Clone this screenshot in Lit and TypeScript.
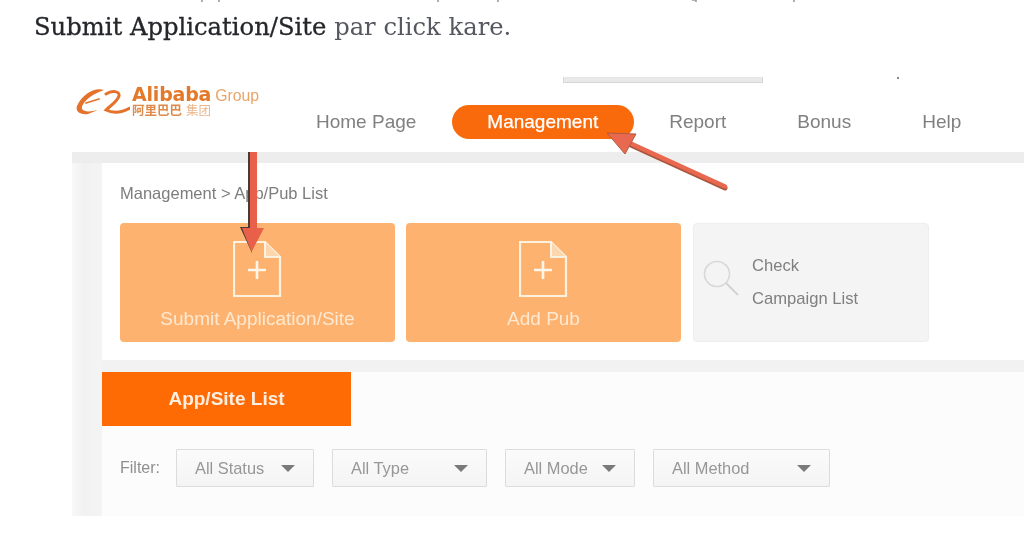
import { LitElement, html, css, svg } from "lit";
import { customElement } from "lit/decorators.js";

const NAV = [
  { label: "Home Page", active: false },
  { label: "Management", active: true },
  { label: "Report", active: false },
  { label: "Bonus", active: false },
  { label: "Help", active: false },
];

const FILTERS = [
  { label: "All Status", width: 138 },
  { label: "All Type", width: 155 },
  { label: "All Mode", width: 130 },
  { label: "All Method", width: 177 },
];

const docIcon = html`<svg class="doc" width="50" height="58" viewBox="1 0 50 58" fill="none">
  <path d="M2 2H33L48 17V56H2Z" stroke="#fdf1df" stroke-width="2.2" />
  <path d="M33 2V17H48" stroke="#fdf1df" stroke-width="2" fill="#fcd7ad" />
  <path d="M16 30H34M25 21V39" stroke="#fff6ea" stroke-width="2.6" />
</svg>`;

@customElement("app-root")
export class AppRoot extends LitElement {
  static styles = css`
    :host {
      display: block;
      position: relative;
      width: 1024px;
      height: 536px;
      overflow: hidden;
      background: #fff;
      font-family: "Liberation Sans", Arial, sans-serif;
    }
    .page {
      filter: blur(0.55px);
    }
    .ticks {
      display: block;
      height: 4px;
    }
    .lead {
      height: 66px;
      box-sizing: border-box;
      padding: 8px 0 0 34px;
      font-family: "DejaVu Serif", serif;
      font-size: 24.25px;
      line-height: 30px;
      color: #55585e;
      white-space: nowrap;
    }
    .lead b {
      font-weight: 400;
      color: #24262a;
      -webkit-text-stroke: 0.3px #24262a;
    }
    .search-row {
      display: flex;
      height: 15px;
      padding: 7px 0 0 563px;
      box-sizing: border-box;
    }
    .sliver {
      width: 200px;
      height: 6px;
      box-sizing: border-box;
      background: #e9e9e9;
      border: 1px solid #d6d6d6;
      border-top-color: #e6e6e6;
    }
    .dot {
      width: 2px;
      height: 2px;
      margin-left: 134px;
      background: #888;
    }
    .masthead {
      display: flex;
      align-items: flex-start;
      height: 67px;
      padding-left: 76px;
    }
    .logo {
      display: flex;
      width: 204.5px;
      flex: none;
      padding-top: 1px;
    }
    .logo-mark {
      flex: none;
      margin-right: 0;
    }
    .logo-words {
      display: flex;
      flex-direction: column;
      margin-left: 2px;
      color: #e57f2e;
    }
    .logo-top {
      display: flex;
      align-items: baseline;
      gap: 4px;
      line-height: 16px;
    }
    .logo-name {
      font-family: "DejaVu Sans", sans-serif;
      font-weight: 700;
      font-size: 19px;
      letter-spacing: -0.2px;
      color: #e4792a;
    }
    .logo-group {
      font-size: 15.8px;
      color: #e9a468;
    }
    .logo-cn {
      margin-top: -1px;
      font-family: "Noto Sans CJK SC", sans-serif;
      font-size: 12.5px;
      line-height: 14px;
      font-weight: 700;
      color: #dd8a4a;
    }
    .logo-cn span {
      font-weight: 400;
      color: #ecb78c;
      margin-left: 4px;
    }
    nav {
      display: flex;
      padding-top: 20px;
    }
    .nav-item {
      display: flex;
      align-items: center;
      height: 34px;
      padding: 0 35.5px;
      font-size: 19px;
      color: #808080;
      white-space: nowrap;
    }
    .nav-item.active {
      background: #f96a0c;
      border-radius: 17px;
      color: #fff;
      -webkit-text-stroke: 0.25px #fff;
    }
    .shell {
      margin-left: 72px;
      border-top: 11px solid #ededed;
      display: grid;
      grid-template-columns: 30px 1fr;
    }
    .rail {
      background: linear-gradient(90deg, #f8f8f8 0, #f1f1f1 40%, #f4f4f4 100%);
    }
    .upper {
      height: 197px;
      box-sizing: border-box;
      padding: 20px 0 0 18px;
      background: #fff;
    }
    .crumb {
      font-size: 16.5px;
      line-height: 20px;
      color: #7d7d7d;
      margin-bottom: 20px;
    }
    .cards {
      display: flex;
      gap: 11px;
    }
    .card {
      width: 275px;
      height: 119px;
      box-sizing: border-box;
      padding-top: 17px;
      background: #fdb26f;
      border-radius: 4px;
      display: flex;
      flex-direction: column;
      align-items: center;
      font-size: 19px;
      color: #fde9d2;
    }
    .card .doc {
      margin-bottom: 10px;
      flex: none;
    }
    .check {
      width: 236px;
      height: 119px;
      margin-left: 1px;
      box-sizing: border-box;
      display: flex;
      background: #f4f4f4;
      border: 1px solid #eeeeee;
      border-radius: 4px;
      padding: 25px 0 0 9px;
    }
    .check-text {
      margin-left: 13px;
      font-size: 16.6px;
      line-height: 33px;
      color: #7f7f7f;
    }
    .check svg {
      margin-top: 11px;
      flex: none;
    }
    .band {
      height: 12px;
      background: #f2f2f2;
    }
    .lower {
      height: 144px;
      background: #fcfcfc;
    }
    .tab {
      width: 249px;
      height: 54px;
      display: flex;
      align-items: center;
      justify-content: center;
      background: #fe6a03;
      font-size: 19px;
      font-weight: 700;
      color: #fdeee0;
    }
    .filters {
      display: flex;
      align-items: center;
      gap: 18px;
      margin-top: 23px;
      padding-left: 18px;
      font-size: 16.4px;
      color: #8f8f8f;
    }
    .filter-label {
      width: 38px;
      white-space: nowrap;
      font-size: 16px;
    }
    .select {
      height: 38px;
      box-sizing: border-box;
      display: flex;
      align-items: center;
      justify-content: space-between;
      padding: 0 18px;
      background: linear-gradient(#fbfbfb, #f4f4f4);
      border: 1px solid #dcdcdc;
      border-radius: 1px;
      color: #979797;
    }
    .caret {
      width: 0;
      height: 0;
      border-left: 7.5px solid transparent;
      border-right: 7.5px solid transparent;
      border-top: 7px solid #7a7a7a;
    }
    .annotations {
      position: absolute;
      inset: 0;
      pointer-events: none;
      filter: blur(0.4px);
    }
  `;

  render() {
    return html`
      <div class="page">
        <svg class="ticks" width="1024" height="4" viewBox="0 0 1024 4">
          <path d="M202 0v2M219 0v2M438 0v2M498 0v2M692 0h4v2M794 0v2" stroke="#9a9a9a" stroke-width="1.6" fill="none" />
        </svg>
        <div class="lead"><b>Submit Application/Site</b> par click kare.</div>
        <div class="search-row"><div class="sliver"></div><div class="dot"></div></div>
        <header class="masthead">
          <div class="logo">
            <svg class="logo-mark" width="54" height="30" viewBox="0 0 54 30" fill="none">
              <path d="M28 4C18 1 6 9 1 20C-1 26 5 29 12 28L22 24C14 26 8 26 6 23C5 19 11 10 28 4Z" fill="#e4722a" />
              <path d="M10 17L23 13" stroke="#e4722a" stroke-width="1.8" stroke-linecap="round" />
              <path d="M30 8C36 4 44 5 43 10C41 16 34 20 30 24C36 27 45 27 54 22" stroke="#e4722a" stroke-width="3" stroke-linecap="round" />
            </svg>
            <div class="logo-words">
              <div class="logo-top"><span class="logo-name">Alibaba</span><span class="logo-group">Group</span></div>
              <div class="logo-cn">阿里巴巴<span>集团</span></div>
            </div>
          </div>
          <nav>
            ${NAV.map((n) => html`<div class="nav-item ${n.active ? "active" : ""}">${n.label}</div>`)}
          </nav>
        </header>
        <div class="shell">
          <div class="rail"></div>
          <div>
            <section class="upper">
              <div class="crumb">Management &gt; App/Pub List</div>
              <div class="cards">
                <div class="card">${docIcon}<span>Submit Application/Site</span></div>
                <div class="card">${docIcon}<span>Add Pub</span></div>
                <div class="check">
                  <svg width="36" height="36" viewBox="0 0 36 36" fill="none">
                    <circle cx="14" cy="14" r="12.5" stroke="#d8d8d8" stroke-width="1.6" />
                    <path d="M23 23L35 35" stroke="#d2d2d2" stroke-width="2" />
                  </svg>
                  <div class="check-text">Check<br />Campaign List</div>
                </div>
              </div>
            </section>
            <div class="band"></div>
            <section class="lower">
              <div class="tab">App/Site List</div>
              <div class="filters">
                <span class="filter-label">Filter:</span>
                ${FILTERS.map(
                  (f) => html`<div class="select" style="width:${f.width}px"><span>${f.label}</span><i class="caret"></i></div>`
                )}
              </div>
            </section>
          </div>
        </div>
      </div>
      <svg class="annotations" width="1024" height="536" viewBox="0 0 1024 536">
        ${svg`
          <path d="M248 152H252V228H248Z" fill="#4a3a36" />
          <path d="M240 227L252 227V253Z" fill="#4a3a36" />
          <path d="M250 152H257V228H264L251.5 252L242 228H250Z" fill="#e8604a" />
          <path d="M725 188L622 141" stroke="#a8553f" stroke-width="5" stroke-linecap="round" />
          <path d="M725 186.500L622 139.500" stroke="#e8694f" stroke-width="4.500" stroke-linecap="round" />
          <path d="M607 133L636 134L625 154Z" fill="#e8694f" stroke="#b05a44" stroke-width="1" />
        `}
      </svg>
    `;
  }
}
